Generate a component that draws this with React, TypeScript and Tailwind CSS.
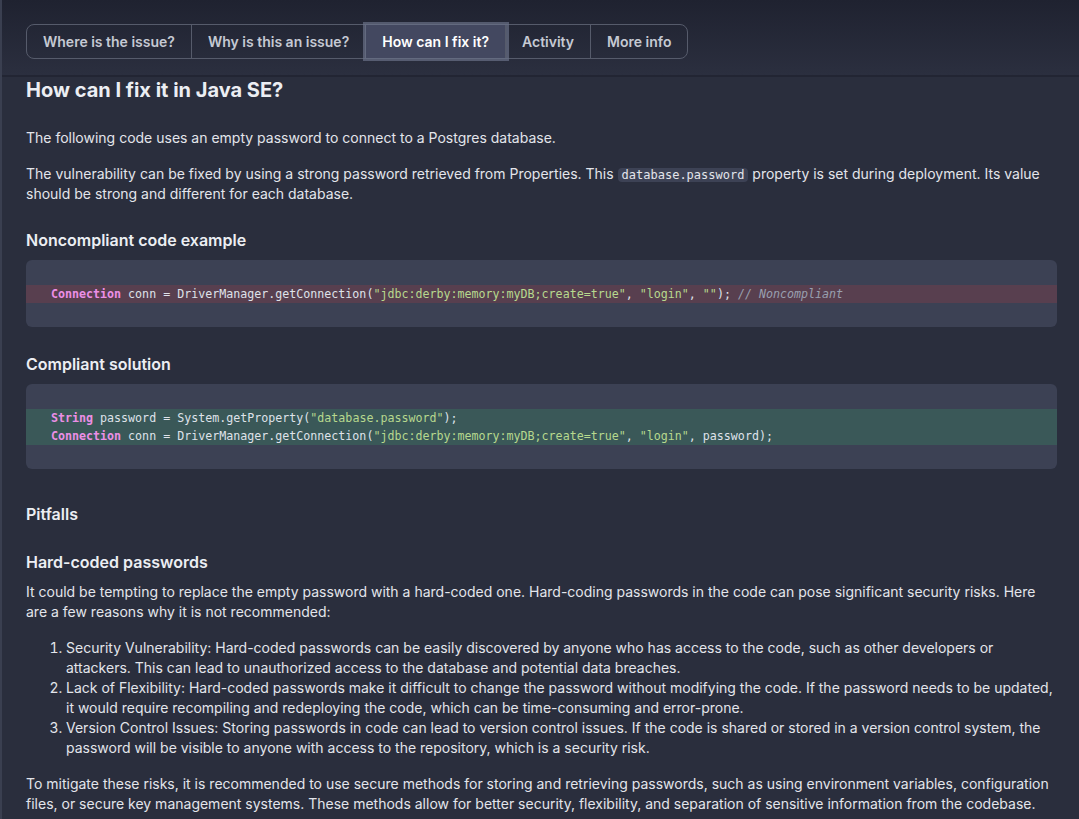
const tabs = ["Where is the issue?", "Why is this an issue?", "How can I fix it?", "Activity", "More info"];

const Kw = ({ children }: { children: React.ReactNode }) => (
  <span className="font-bold text-[#ec8fe6]">{children}</span>
);
const Str = ({ children }: { children: React.ReactNode }) => (
  <span className="text-[#b7d98e]">{children}</span>
);

const App = () => {
  return (
    <div className="min-h-screen bg-[#2a2e3d] border-l-2 border-[#3a3f50] text-[#e3e5eb] font-['Inter','Noto_Sans',sans-serif]">
      {/* tab header */}
      <div className="h-[77px] pt-[24px] px-[24px] bg-gradient-to-b from-[#1f2230] to-[#2b2f3f] border-b-2 border-[#222533]">
        <div className="inline-flex h-[35px] rounded-lg border border-[#565b6b]">
          {tabs.map((t, i) => {
            const active = i === 2;
            return (
              <div
                key={t}
                className={
                  active
                    ? "relative flex items-center px-4 text-[14px] font-semibold text-white bg-[#434860] ring-[3px] ring-[#6a7088]/70 border-r border-[#565b6b]"
                    : i === tabs.length - 1
                    ? "flex items-center px-4 text-[14px] font-semibold text-[#c5c9d3]"
                    : "flex items-center px-4 text-[14px] font-semibold text-[#c5c9d3] border-r border-[#565b6b]"
                }
              >
                {t}
              </div>
            );
          })}
        </div>
      </div>

      <div className="px-[24px] pr-[22px]">
        <h1 className="text-[20px] leading-[28px] font-bold text-[#eceef3] -mt-[1px]">How can I fix it in Java SE?</h1>

        <p className="mt-[24px] text-[14px] leading-[20px]">
          The following code uses an empty password to connect to a Postgres database.
        </p>
        <p className="mt-[16px] text-[14px] leading-[20px]">
          The vulnerability can be fixed by using a strong password retrieved from Properties. This{" "}
          <code className="px-[4px] rounded bg-[#3d4255] text-[12px] leading-[16px] font-['DejaVu_Sans_Mono',monospace]">database.password</code>{" "}
          property is set during deployment. Its value should be strong and different for each database.
        </p>

        <h3 className="mt-[24px] text-[16px] leading-[24px] font-semibold text-[#eceef3]">Noncompliant code example</h3>
        <pre className="mt-[8px] pt-[25px] pb-[24px] rounded-md bg-[#3c4154] text-[11.65px] leading-[18px] font-['DejaVu_Sans_Mono',monospace] text-[#dfe2ea]">
          <div className="px-[25px] bg-[#583f4f]">
            <Kw>Connection</Kw> conn = DriverManager.getConnection(<Str>"jdbc:derby:memory:myDB;create=true"</Str>, <Str>"login"</Str>, <Str>""</Str>);{" "}
            <span className="italic text-[#98a0b0]">// Noncompliant</span>
          </div>
        </pre>

        <h3 className="mt-[25px] text-[16px] leading-[24px] font-semibold text-[#eceef3]">Compliant solution</h3>
        <pre className="mt-[8px] pt-[25px] pb-[24px] rounded-md bg-[#3c4154] text-[11.65px] leading-[18px] font-['DejaVu_Sans_Mono',monospace] text-[#dfe2ea]">
          <div className="px-[25px] bg-[#3a5858]">
            <div>
              <Kw>String</Kw> password = System.getProperty(<Str>"database.password"</Str>);
            </div>
            <div>
              <Kw>Connection</Kw> conn = DriverManager.getConnection(<Str>"jdbc:derby:memory:myDB;create=true"</Str>, <Str>"login"</Str>, password);
            </div>
          </div>
        </pre>

        <h3 className="mt-[33px] text-[16px] leading-[24px] font-semibold text-[#eceef3]">Pitfalls</h3>
        <h4 className="mt-[24px] text-[16px] leading-[24px] font-semibold text-[#eceef3]">Hard-coded passwords</h4>
        <p className="mt-[8px] text-[14px] leading-[20px]">
          It could be tempting to replace the empty password with a hard-coded one. Hard-coding passwords in the code can pose significant security risks. Here are a few reasons why it is not recommended:
        </p>
        <ol className="mt-[16px] list-decimal pl-[40px] text-[14px] leading-[20px]">
          <li>
            Security Vulnerability: Hard-coded passwords can be easily discovered by anyone who has access to the code, such as other developers or attackers. This can lead to unauthorized access to the database and potential data breaches.
          </li>
          <li>
            Lack of Flexibility: Hard-coded passwords make it difficult to change the password without modifying the code. If the password needs to be updated, it would require recompiling and redeploying the code, which can be time-consuming and error-prone.
          </li>
          <li>
            Version Control Issues: Storing passwords in code can lead to version control issues. If the code is shared or stored in a version control system, the password will be visible to anyone with access to the repository, which is a security risk.
          </li>
        </ol>
        <p className="mt-[16px] text-[14px] leading-[20px]">
          To mitigate these risks, it is recommended to use secure methods for storing and retrieving passwords, such as using environment variables, configuration files, or secure key management systems. These methods allow for better security, flexibility, and separation of sensitive information from the codebase.
        </p>
      </div>
    </div>
  );
};

export default App;
